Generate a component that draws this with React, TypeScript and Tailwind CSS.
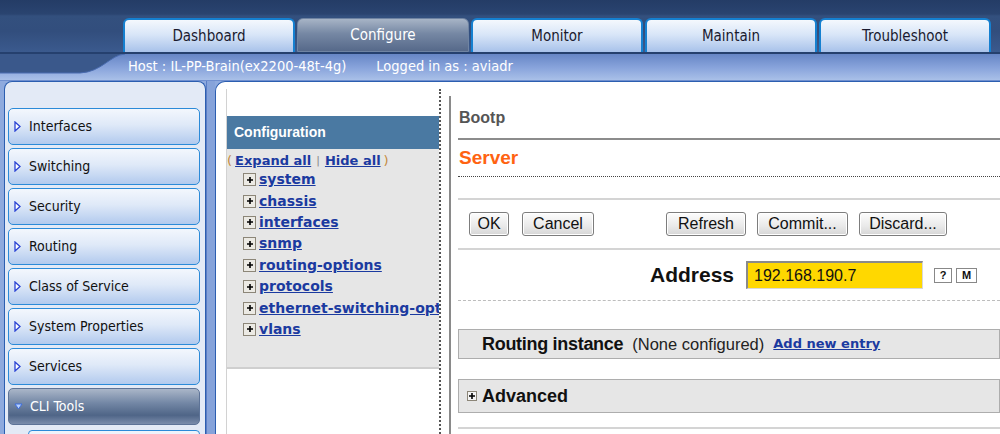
import React from "react";

const TAHOMA = { fontFamily: '"DejaVu Sans Condensed", "Liberation Sans", sans-serif' };
const ARIAL = { fontFamily: '"Liberation Sans", Arial, sans-serif' };
const VERDANA = { fontFamily: '"DejaVu Sans", Verdana, sans-serif' };

const tabs = ["Dashboard", "Configure", "Monitor", "Maintain", "Troubleshoot"];
const navItems = ["Interfaces", "Switching", "Security", "Routing", "Class of Service", "System Properties", "Services"];
const treeItems = ["system", "chassis", "interfaces", "snmp", "routing-options", "protocols", "ethernet-switching-options", "vlans"];

const PlusBox = ({ small }: { small?: boolean }) => (
  <span
    className={
      small
        ? "inline-flex w-[10px] h-[10px] items-center justify-center border border-[#8c8678] bg-[#f4f4f4] shrink-0"
        : "inline-flex w-[13px] h-[13px] items-center justify-center border border-[#8c8678] bg-[#eceae4] shrink-0"
    }
  >
    <svg width="8" height="8" viewBox="0 0 8 8">
      <path d="M1 4h6M4 1v6" stroke="#000" strokeWidth="1.6" />
    </svg>
  </span>
);

const NavItem = ({ label }: { label: string }) => (
  <div className="h-[37px] shrink-0 rounded-[5px] border border-[#2b8ad8] bg-[linear-gradient(to_bottom,#f3f7fd,#dfe9f8_45%,#b2caee)] flex items-center pl-[5px] gap-[8px] text-[14px] text-[#111]" style={TAHOMA}>
    <svg width="7" height="11" viewBox="0 0 7 11">
      <path d="M1 1L6 5.5L1 10Z" fill="#fff" stroke="#2a43d4" strokeWidth="1.3" />
    </svg>
    <span>{label}</span>
  </div>
);

const Btn = ({ label, w }: { label: string; w: string }) => (
  <div className={`${w} h-[24px] rounded-[3px] border border-[#7d7d7d] bg-[linear-gradient(to_bottom,#fdfdfd,#e9e9e9_60%,#d6d6d6)] flex items-center justify-center text-[16px] text-[#111] shadow-[inset_0_0_0_1px_#fff]`} style={ARIAL}>
    {label}
  </div>
);

export default function App() {
  return (
    <div className="w-[1000px] h-[434px] overflow-hidden flex flex-col bg-[#8eaade]">
      {/* top header with tabs */}
      <div className="h-[52px] bg-[linear-gradient(to_bottom,#243c66_0,#2a4470_14px,#33507e_16px,#324e7d_60%,#3b5a8e)] flex items-end pl-[123px] gap-[2px]">
        {tabs.map((t) => {
          const active = t === "Configure";
          return (
            <div
              key={t}
              className={
                active
                  ? "w-[172px] h-[34px] rounded-t-[6px] border border-[#6f84a3] bg-[linear-gradient(to_bottom,#a7b4c6,#7688a4_45%,#56698a)] flex items-center justify-center text-[15px] text-white"
                  : "w-[172px] h-[34px] rounded-t-[6px] border-2 border-b-0 border-[#1580d0] bg-[linear-gradient(to_bottom,#f4f8fd,#d9e6f8_45%,#a8c2ea)] flex items-center justify-center text-[15px] text-[#1a1a2e]"
              }
              style={TAHOMA}
            >
              {t}
            </div>
          );
        })}
      </div>

      {/* host bar */}
      <div className="h-[28px] flex items-center bg-[linear-gradient(to_bottom,#6686c6,#8aa5dc_55%,#a9c0e8)] border-t-2 border-[#25406e] text-[14.5px] text-white" style={TAHOMA}>
        <svg width="125" height="26" viewBox="0 0 125 26" className="shrink-0 self-start">
          <path d="M0 0H125C110 1 102 18 80 19H0Z" fill="#3a588b" />
          <path d="M0 19H80C102 18 110 1 125 0" fill="none" stroke="#4a6cb0" strokeWidth="1" />
        </svg>
        <span className="ml-[3px]">Host : IL-PP-Brain(ex2200-48t-4g)</span>
        <span className="ml-[30px]">Logged in as : aviadr</span>
      </div>

      {/* body */}
      <div className="flex-1 flex min-h-0 pl-[4px] border-t border-[#6f8fcf]">
        {/* sidebar */}
        <div className="w-[202px] shrink-0 rounded-t-[8px] border border-b-0 border-[#2c5eb0] bg-[#e3eaf6] pt-[26px] pl-[3px] pr-[5px] flex flex-col gap-[3px] overflow-hidden">
          {navItems.map((n) => (
            <NavItem key={n} label={n} />
          ))}
          <div className="h-[37px] shrink-0 rounded-[5px] border border-[#5d7397] bg-[linear-gradient(to_bottom,#aab6c8,#7387a5_40%,#4f6587_75%,#7a8cab)] flex items-center pl-[5px] gap-[7px] text-[14px] text-white" style={TAHOMA}>
            <svg width="9" height="7" viewBox="0 0 9 7">
              <path d="M1 1H8L4.5 6Z" fill="#b9d3ff" stroke="#3e6ee0" strokeWidth="1" />
            </svg>
            <span>CLI Tools</span>
          </div>
          <div className="ml-[20px] mt-[2px] h-[30px] shrink-0 rounded-t-[4px] border border-[#2b8ad8] bg-[#eef3fb]" />
        </div>

        {/* divider strip */}
        <div className="w-[9px] shrink-0 border-l border-[#5a7dc4] bg-[#86a3da]" />

        {/* main panel */}
        <div className="flex-1 min-w-0 bg-white rounded-tl-[10px] border-l border-t border-[#2c5eb0] flex pt-[7px] pl-[10px]">
          {/* config tree */}
          <div className="w-[215px] shrink-0 border-l border-[#d2d2d2] border-r-2 border-r-[#555] flex flex-col" style={{ borderRightStyle: "dotted" }}>
            <div className="h-[27px] shrink-0" />
            <div className="h-[33px] shrink-0 bg-[#4a79a2] flex items-center pl-[7px] text-[14px] font-bold text-white" style={ARIAL}>
              Configuration
            </div>
            <div className="h-[220px] shrink-0 bg-[#e6e6e6] border-b-2 border-[#cfcfcf] pt-[3px] overflow-hidden" style={VERDANA}>
              <div className="flex items-center h-[18px] text-[13px] font-bold whitespace-nowrap">
                <span className="text-[#c58a3e] font-normal mr-[3px]">(</span>
                <span className="text-[#1b3aa0] underline">Expand all</span>
                <span className="text-[#888] font-normal mx-[5px] text-[11px]">|</span>
                <span className="text-[#1b3aa0] underline">Hide all</span>
                <span className="text-[#c58a3e] font-normal ml-[3px]">)</span>
              </div>
              <div className="flex flex-col mt-[-1px]">
                {treeItems.map((t) => (
                  <div key={t} className="h-[21.4px] flex items-center pl-[16px] gap-[3px] whitespace-nowrap">
                    <PlusBox />
                    <span className="text-[14px] font-bold text-[#1b3aa0] underline">{t}</span>
                  </div>
                ))}
              </div>
            </div>
          </div>

          {/* content */}
          <div className="flex-1 min-w-0 ml-[8px] mt-[7px] pt-[6px] border-l-2 border-[#8a8a8a] pl-[7px] flex flex-col" style={ARIAL}>
            <div className="h-[38px] shrink-0 flex items-end pb-[8px] border-b-2 border-[#8c8c8c] text-[16px] font-bold text-[#555] pl-[1px]">
              Bootp
            </div>
            <div className="h-[37px] shrink-0 flex items-center border-b border-dotted border-[#444] text-[19px] font-bold text-[#ff6311] pl-[1px]">
              Server
            </div>
            <div className="h-[23px] shrink-0 border-b-2 border-[#d4d4d4]" />
            <div className="h-[50px] shrink-0 flex items-center border-b-2 border-[#d4d4d4] pl-[11px]">
              <Btn label="OK" w="w-[40px]" />
              <div className="w-[13px]" />
              <Btn label="Cancel" w="w-[72px]" />
              <div className="w-[72px]" />
              <Btn label="Refresh" w="w-[80px]" />
              <div className="w-[11px]" />
              <Btn label="Commit..." w="w-[91px]" />
              <div className="w-[11px]" />
              <Btn label="Discard..." w="w-[88px]" />
            </div>
            <div className="h-[51px] shrink-0 flex items-center border-b border-dashed border-[#bdbdbd]">
              <div className="w-[276px] text-right text-[21px] font-bold text-[#111]">Address</div>
              <div className="ml-[12px] w-[177px] h-[28px] bg-[#ffd800] border-l-2 border-t-2 border-[#8a8a8a] border-r border-b border-r-[#d8d8d8] border-b-[#d8d8d8] flex items-center pl-[6px] text-[16px] text-[#111]">
                192.168.190.7
              </div>
              <div className="ml-[11px] w-[18px] h-[15px] border border-[#888] flex items-center justify-center text-[11px] font-bold text-[#111]">?</div>
              <div className="ml-[4px] w-[21px] h-[15px] border border-[#888] flex items-center justify-center text-[11px] font-bold text-[#111]">M</div>
            </div>
            <div className="h-[28px] shrink-0" />
            <div className="h-[30px] shrink-0 bg-[#e6e6e6] border border-[#adadad] flex items-center pl-[23px] whitespace-nowrap">
              <span className="text-[18px] font-bold text-[#111] tracking-[-0.3px]">Routing instance</span>
              <span className="ml-[9px] text-[16.5px] text-[#222]">(None configured)</span>
              <span className="ml-[9px] text-[13px] font-bold text-[#1b3aa0] underline" style={VERDANA}>Add new entry</span>
            </div>
            <div className="h-[20px] shrink-0" />
            <div className="h-[34px] shrink-0 bg-[#e6e6e6] border border-[#adadad] flex items-center pl-[8px] gap-[5px]">
              <PlusBox small />
              <span className="text-[18px] font-bold text-[#111]">Advanced</span>
            </div>
            <div className="h-[16px] shrink-0 border-b-2 border-[#d4d4d4]" />
          </div>
        </div>
      </div>
    </div>
  );
}
